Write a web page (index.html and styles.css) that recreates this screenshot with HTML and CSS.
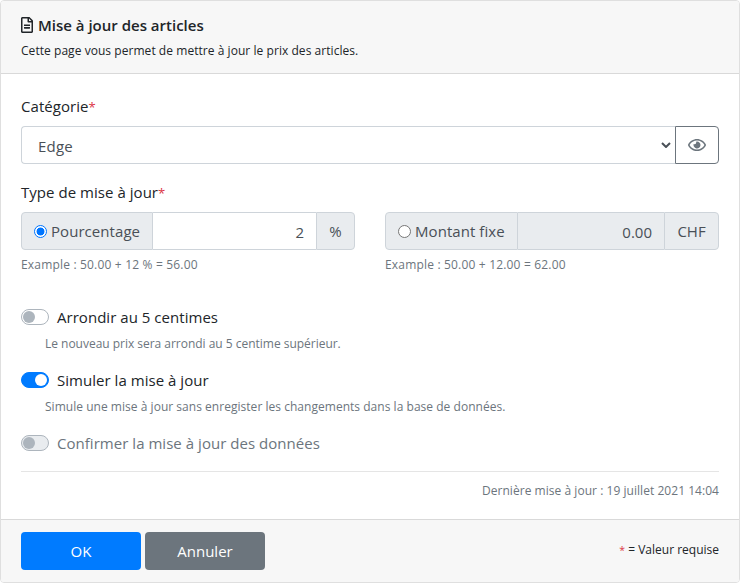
FILE: index.html
```html
<!DOCTYPE html>
<html lang="fr">
<head>
<meta charset="utf-8">
<title>Mise à jour des articles</title>
<link rel="stylesheet" href="styles.css">
</head>
<body>
<form class="card">
  <header class="card-header">
    <h1 class="title">
      <svg class="icon-file" viewBox="0 0 384 512"><path fill="currentColor" d="M288 248v28c0 6.600-5.400 12-12 12H108c-6.600 0-12-5.400-12-12v-28c0-6.600 5.400-12 12-12h168c6.600 0 12 5.400 12 12zm-12 72H108c-6.600 0-12 5.400-12 12v28c0 6.600 5.400 12 12 12h168c6.600 0 12-5.400 12-12v-28c0-6.600-5.400-12-12-12zm108-188.100V464c0 26.500-21.500 48-48 48H48c-26.500 0-48-21.500-48-48V48C0 21.500 21.500 0 48 0h204.100C264.800 0 277 5.100 286 14.100L369.900 98c9 8.900 14.100 21.200 14.100 33.900zm-128-80V128h76.100L256 51.900zM336 464V176H232c-13.300 0-24-10.700-24-24V48H48v416h288z"/></svg>
      <span>Mise à jour des articles</span>
    </h1>
    <p class="small subtitle">Cette page vous permet de mettre à jour le prix des articles.</p>
  </header>
  <main class="card-body">
    <div class="group">
      <label class="label">Catégorie<span class="required">*</span></label>
      <div class="input-group">
        <div class="select"><span>Edge</span>
          <svg class="chevron" viewBox="0 0 10 6"><path d="M1 1l4 4 4-4" fill="none" stroke="#495057" stroke-width="2"/></svg>
        </div>
        <button type="button" class="eye">
          <svg class="icon-eye" viewBox="0 0 576 512"><path fill="currentColor" d="M288 144a110.900 110.900 0 0 0-31.200 5 55.400 55.400 0 0 1 7.200 27 56 56 0 0 1-56 56 55.400 55.400 0 0 1-27-7.200A111.700 111.700 0 1 0 288 144zm284.500 97.400C518.300 135.600 410.900 64 288 64S57.700 135.600 3.500 241.400a32.400 32.400 0 0 0 0 29.200C57.700 376.400 165.100 448 288 448s230.300-71.600 284.500-177.400a32.400 32.400 0 0 0 0-29.200zM288 400c-98.700 0-189.100-55-237.900-144C98.900 167 189.300 112 288 112s189.100 55 237.900 144C477.100 345 386.700 400 288 400z"/></svg>
        </button>
      </div>
    </div>
    <div class="label label-type">Type de mise à jour<span class="required">*</span></div>
    <div class="columns">
      <div class="column">
        <div class="input-group">
          <label class="addon addon-radio"><span class="radio radio-on"></span><span>Pourcentage</span></label>
          <div class="field">2</div>
          <div class="addon addon-pct">%</div>
        </div>
        <p class="small muted example">Example : 50.00 + 12 % = 56.00</p>
      </div>
      <div class="column">
        <div class="input-group">
          <label class="addon addon-radio"><span class="radio"></span><span>Montant fixe</span></label>
          <div class="field disabled">0.00</div>
          <div class="addon addon-chf">CHF</div>
        </div>
        <p class="small muted example">Example : 50.00 + 12.00 = 62.00</p>
      </div>
    </div>
    <div class="option">
      <label class="switch-row"><span class="switch"></span><span>Arrondir au 5 centimes</span></label>
      <p class="small muted help help-round">Le nouveau prix sera arrondi au 5 centime supérieur.</p>
    </div>
    <div class="option">
      <label class="switch-row"><span class="switch switch-on"></span><span>Simuler la mise à jour</span></label>
      <p class="small muted help">Simule une mise à jour sans enregister les changements dans la base de données.</p>
    </div>
    <label class="switch-row muted"><span class="switch switch-disabled"></span><span>Confirmer la mise à jour des données</span></label>
    <hr class="rule">
    <p class="small muted updated">Dernière mise à jour : 19 juillet 2021 14:04</p>
  </main>
  <footer class="card-footer">
    <button type="button" class="btn btn-primary">OK</button>
    <button type="button" class="btn btn-secondary">Annuler</button>
    <span class="small legend"><span class="required">*</span> = Valeur requise</span>
  </footer>
</form>
</body>
</html>
```
FILE: styles.css
```css
* { box-sizing: border-box; }
body { margin: 0; background: #fff; color: #212529; font: 15px/24px "Open Sans", "Noto Sans", sans-serif; }
p, h1 { margin: 0; }
button { font: inherit; }
.card { height: 583px; display: flex; flex-direction: column; border: 1px solid #dfdfdf; border-radius: 4px; overflow: hidden; }
.card-header { height: 73px; flex: none; padding: 12px 20px; background: #f7f7f7; border-bottom: 1px solid #d9d9d9; }
.title { display: flex; align-items: center; gap: 5px; font-size: 15px; line-height: 24px; font-weight: 600; }
.icon-file { width: 12px; height: 16px; }
.small { font-size: 12px; line-height: 19px; }
.subtitle { margin-top: 4px; letter-spacing: 0.05px; }
.muted { color: #6c757d; }
.card-body { flex: 1; padding: 20px 20px 18px; }
.group { margin-bottom: 16px; }
.label { display: block; height: 24px; margin-bottom: 8px; letter-spacing: 0.060px; }
.label-type { letter-spacing: 0.040px; }
.required { color: #dc3545; font-size: 0.870em; line-height: 1; }
.input-group { display: flex; height: 38px; color: #495057; }
.select { flex: 1; display: flex; align-items: center; justify-content: space-between; padding: 2px 4px 0 16px; letter-spacing: 0.200px; border: 1px solid #ced4da; border-right: 0; border-radius: 4px 0 0 4px; }
.chevron { width: 10px; height: 6px; margin-top: -3px; }
.eye { width: 44px; padding: 0; display: flex; align-items: center; justify-content: center; color: #6c757d; background: #fff; border: 1px solid #6c757d; border-radius: 0 4px 4px 0; }
.icon-eye { width: 18px; height: 16px; }
.columns { display: grid; grid-template-columns: 1fr 1fr; gap: 30px; margin-bottom: 31px; }
.addon { display: flex; align-items: center; background: #e9ecef; border: 1px solid #ced4da; white-space: nowrap; }
.addon-radio { width: 132px; padding-left: 12px; gap: 4px; letter-spacing: 0.060px; border-radius: 4px 0 0 4px; }
.column + .column .addon-radio { width: 133px; }
.addon-pct, .addon-chf { justify-content: center; border-radius: 0 4px 4px 0; }
.addon-pct { width: 39px; }
.addon-chf { width: 55px; }
.field { flex: 1; padding: 7px 12px 0; text-align: right; border: 1px solid #ced4da; border-width: 1px 0; }
.disabled { background: #e9ecef; }
.radio { width: 13px; height: 13px; flex: none; border: 1px solid #767676; border-radius: 50%; background: #fff; }
.radio-on { border-color: #0075ff; background: radial-gradient(circle, #0075ff 0 3.600px, #fff 4.300px); }
.example { margin-top: 5px; letter-spacing: 0.180px; }
.option { height: 63px; }
.switch-row { display: flex; align-items: center; gap: 8px; height: 24px; letter-spacing: 0.035px; }
.switch { width: 28px; height: 16px; flex: none; padding: 1px; border: 1px solid #adb5bd; border-radius: 8px; background: #fff; }
.switch::before { content: ""; display: block; width: 12px; height: 12px; border-radius: 50%; background: #adb5bd; }
.switch-on { border-color: #007bff; background: #007bff; }
.switch-on::before { background: #fff; margin-left: 12px; }
.switch-disabled { background: #e9ecef; }
.help { margin: 5px 0 0 24px; letter-spacing: 0.030px; }
.help-round { letter-spacing: -0.020px; }
.rule { height: 1px; margin: 16px 0 9px; border: 0; background: #e5e5e5; }
.updated { text-align: right; letter-spacing: 0.040px; }
.card-footer { height: 63px; flex: none; display: flex; align-items: center; gap: 4px; padding: 0 20px; background: #f7f7f7; border-top: 1px solid #d9d9d9; }
.btn { width: 120px; height: 38px; padding: 0; color: #fff; border: 0; border-radius: 4px; }
.btn-primary { background: #007bff; }
.btn-secondary { background: #6c757d; }
.legend { margin: -3px 0 0 auto; }
```
